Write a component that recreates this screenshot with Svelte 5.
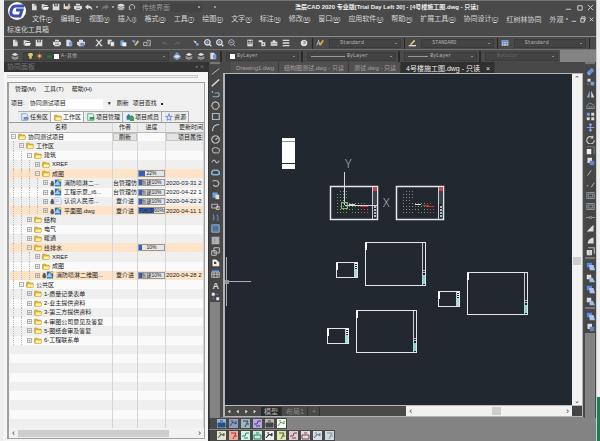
<script lang="ts">
  interface Shape {
    d: string;
    f?: string;
    s?: string;
    w?: number;
  }

  interface Row {
    name: string;
    level: number;
    icon?: string;
    open?: boolean;
    author?: string;
    progress?: number;
    label?: string;
    date?: string;
    hot?: boolean;
  }

  const light = "#dcdcdc";
  const blue = "#6d9fe0";

  // All icons are drawn on a 12x12 grid
  const icons: Record<string, Shape[]> = {
    file: [{ d: "M3 1h4l3 3v7H3z", f: light }, { d: "M7 1v3h3", s: "#777" }],
    open: [{ d: "M1 2h4l1 1h4v2H4l-2 4H1z", f: light }, { d: "M4 6h8l-2 4H2z", f: "#f4f4f4" }],
    save: [{ d: "M1 1h2v4h6V1h2v10H1z", f: light }, { d: "M4 1h4v3H4z", f: "#aaa" }],
    saveas: [{ d: "M1 1h2v4h5V1h2v8H1z", f: light }, { d: "M5 10l5-6 2 2-5 5z", f: "#e2b266" }],
    print: [{ d: "M3 1h6v3h2l1 1v4h-2v2H2V9H0V5l1-1h2z", f: light }, { d: "M3 4h6M3 8h6", s: "#555" }],
    undo: [{ d: "M5 2v2q6 0 6 7-2-4-6-4v3L0 6z", f: light }],
    redo: [{ d: "M7 2v2q-6 0-6 7 2-4 6-4v3l5-4z", f: "#777" }],
    redoDim: [{ d: "M7 3v2q-5 0-5 5 2-3 5-3v2l4-3z", f: "#5e5e5e" }],
    undoDim: [{ d: "M5 3v2q5 0 5 5-2-3-5-3v2L1 6z", f: "#5e5e5e" }],
    disk: [{ d: "M1 3q5-4 10 0v6q-5 4-10 0z", f: light }, { d: "M1 5q5 3 10 0M1 8q5 3 10 0", s: "#555" }],
    refresh: [{ d: "M3 9a4 4 0 1 1 6 0M2 6v4h3", s: "#b5b5b5", w: 1.5 }],
    preview: [{ d: "M2 1h5l3 3v7H2z", f: light }, { d: "M6 4h5v6H6z", f: blue }],
    publish: [{ d: "M3 1h6v3h3v5h-2v2H2V9H0V4h3z", f: light }, { d: "M5 6h6v4H5z", f: "#5a8fd8" }],
    cut: [{ d: "M2 1l7 8M10 1L3 9", s: light, w: 2 }, { d: "M1 9h3v2H1zM8 9h3v2H8z", f: light }],
    copy: [{ d: "M1 1h6v7H1z", f: light }, { d: "M5 4h6v7H5z", f: "#eee", s: "#555" }],
    paste: [{ d: "M2 2h5v8H2z", f: blue }, { d: "M5 5h6v6H5z", f: "#e8eefc" }],
    brush: [{ d: "M1 2h6l-2 5z", f: "#6aa0e8" }, { d: "M5 9l5-7 2 2-5 6z", f: "#e1c27c" }],
    block: [{ d: "M1 5h5v5H1zM6 2h5v8H7", s: light }, { d: "M6 2l4 6", s: "#d6a85c" }],
    pan: [{ d: "M2 2l3 5 2-3z", f: light }, { d: "M6 6h4v4H6z", f: blue }],
    zoomin: [{ d: "M5 1a4 4 0 1 0 .1 0M8 8l3 3", s: light, w: 2 }, { d: "M3 5h4M5 3v4", s: blue, w: 2 }],
    zoomout: [{ d: "M5 1a4 4 0 1 0 .1 0M8 8l3 3", s: light, w: 1 }, { d: "M3 5h4", s: blue, w: 2 }],
    props: [{ d: "M2 1h8v10H2z", f: light }, { d: "M3 3h2v2H3zM7 3h2v2H7zM3 7h6", f: "#555", s: "#555" }],
    tree: [{ d: "M1 2h6v3H1zM5 5h6v6H5z", f: light }, { d: "M7 7h2v2H7z", f: "#555" }],
    box: [{ d: "M1 4h10v6H1zM4 2h4v2H4z", f: light }, { d: "M1 7h10", s: "#777" }],
    list: [{ d: "M1 1h10v2H1zM1 5h10v2H1zM1 9h10v2H1z", f: light }],
    help: [{ d: "M6 1a5 5 0 1 0 .1 0z", f: light }, { d: "M5 4h3v2H6v2", s: "#666" }],
    textstyle: [{ d: "M1 10l3-8 2 8M2 7h3", s: light }, { d: "M5 8l5-7 2 2-5 7z", f: "#e3a544" }],
    dimstyle: [{ d: "M1 10h11", s: light, w: 2 }, { d: "M3 8l6-7 2 2-6 6z", f: "#e8c46a" }],
    tablestyle: [{ d: "M1 2h10v8H1z", f: light }, { d: "M1 2h10v3H1z", f: "#5a8fe0" }, { d: "M1 7h10M4 5v5M8 5v5", s: "#4773bd" }],
    layers: [{ d: "M1 4l5-3 5 3-5 2z", f: light }, { d: "M1 7l5 2 5-2M1 9l5 2 5-2", s: light }],
    layersBlue: [{ d: "M6 0l4 4H2z", f: blue }, { d: "M0 6l6-2 6 2-6 4z", f: light }, { d: "M1 8l5 3 5-3", s: blue, w: 2 }],
    bulb: [{ d: "M6 1a3 3 0 0 1 2 6v3H4V7a3 3 0 0 1 2-6z", f: "#e9c565" }, { d: "M4 10h4", s: light }],
    sun: [{ d: "M6 0v12M0 6h12M2 2l8 8M10 2l-8 8", s: "#c77b3d" }, { d: "M4 4h4v4H4z", f: "#f2d05f" }],
    lock: [{ d: "M4 5h7v5H4z", f: "#2c7436" }, { d: "M5 5V2h4v3", s: "#35653b" }],
    line: [{ d: "M1 10l10-8", s: light, w: 1 }],
    ray: [{ d: "M1 11L11 2", s: light, w: 2 }],
    pline: [{ d: "M1 2h1v2M2 9h6q3 0 3-3T8 4H5", s: "#8fa9c8", w: 1.5 }],
    polygon: [{ d: "M6 1l4 2 1 4-3 4H4L1 7l1-4z", s: "#bdbdbd", w: 1.5 }],
    rect: [{ d: "M2 2h9v8H2z", s: "#aebccd", w: 1.5 }],
    arc: [{ d: "M2 11Q2 2 11 2", s: "#bccadb", w: 1.5 }],
    circle: [{ d: "M6 1a5 5 0 1 0 .1 0M6 6l3-2", s: "#c4c4c4", w: 1.5 }],
    cloud: [{ d: "M3 3q3-2 6 0 3 1 2 4 0 3-4 2-5 1-5-3-1-1 1-3", s: "#aaa", w: 1.5 }],
    spline: [{ d: "M1 7q3-5 5-1t5-1", s: "#bbb", w: 1.5 }],
    ellipse: [{ d: "M3 3h6l2 2v3L9 9H3L1 8V5z", s: "#88b3d8", w: 2 }],
    earc: [{ d: "M2 3q4-2 7 0 3 3 0 6-3 2-6-1", s: "#bbb", w: 1.5 }],
    insert: [{ d: "M2 2h7v7H2z", f: blue }, { d: "M6 5h5v6H6z", f: light }],
    makeblock: [{ d: "M1 3h8v5H1zM7 6h4v4H7z", s: light }],
    points: [{ d: "M3 2q2 4 0 8M8 2q2 4 1 9", s: "#6486c8", w: 1.5 }],
    hatch: [{ d: "M1 1h10v10H1z", f: "#547ea9", s: "#a8bdd0" }, { d: "M4 3v6M8 3v6M3 6h6", s: "#41678d" }],
    gradient: [{ d: "M1 1h10v10H1z", f: "#b0b5b8" }, { d: "M1 1v10M11 1v10M5 3v6", s: "#777c82" }],
    region: [{ d: "M4 1h7v7H4zM1 5h6v6H1z", s: "#c4c4c4", w: 1.3 }],
    wipe: [{ d: "M2 2h5l4 4v5H2z", f: "#eee" }, { d: "M4 5h3v3H4z", f: "#444" }],
    table: [{ d: "M1 1h10v3H1z", f: "#4978bd" }, { d: "M1 4h10v7H1zM1 7h10M4 4v7M8 4v7", s: light }],
    dots: [{ d: "M1 1h4v4H1zM7 7h4v4H7z", f: "#e6e6f4" }, { d: "M6 3h4M3 6v4", s: "#6d87c9" }],
    erase: [{ d: "M2 6l6-5 3 4-6 6H2z", f: "#648ee0" }, { d: "M2 7l3 3", s: "#ddd" }],
    copyobj: [{ d: "M2 1h4v4H2z", f: light }, { d: "M6 5h5v5H6z", f: blue }, { d: "M1 8h3", s: "#d59259" }],
    mirror: [{ d: "M5 1v9H1z", f: "#7ba7dc" }, { d: "M7 1v9h4z", f: light }],
    offset: [{ d: "M1 10h10V7Q9 3 5 3 2 4 1 7zM3 8h6", s: "#8ca9c4" }],
    array: [{ d: "M1 1h4v4H1z", f: blue }, { d: "M7 1h4v4H7zM1 7h4v4H1zM7 7h4v4H7z", f: light }],
    move: [{ d: "M6 1v10M1 6h10M4 3l2-2 2 2M4 9l2 2 2-2", s: "#7ca3eb", w: 1.5 }],
    rotate: [{ d: "M9 3a5 5 0 1 0 2 4M9 1v3H6", s: "#c9c9c9", w: 1.5 }],
    scale: [{ d: "M1 4h6v7H1z", f: "#eee" }, { d: "M1 1h10v10", s: "#6a94a4" }],
    stretch: [{ d: "M2 1h6v7H2z", f: light }, { d: "M5 5h6v6H5z", f: "#5a86ca" }],
    trim: [{ d: "M2 10L7 3", s: light }],
    extend: [{ d: "M7 11l4-6M1 9h2", s: light }],
    breakat: [{ d: "M1 2h10v8H1zM3 4h6v4H3z", s: "#9eabb8" }],
    join: [{ d: "M0 6h4M8 6h4M5 4v4M7 4v4", s: "#b5b5b5" }],
    chamfer: [{ d: "M1 10L10 1v9z", f: light }],
    fillet: [{ d: "M2 10q1-7 8-8v8z", f: light }],
    explode: [{ d: "M1 4h7v7H1z", f: light }, { d: "M3 1h8v8M5 4v7", s: "#b7b7b7", w: 1.5 }],
    front: [{ d: "M1 1h7v6H1z", f: "#5c8ae2" }, { d: "M4 4h6l2 7H5z", f: "#a9c2f2" }],
    back: [{ d: "M1 1h6v6H1z", f: light }, { d: "M4 5h5l3 6H5z", f: "#9dbbee" }],
  };

  const quick = ["file", "open", "save", "saveas", "print", "undo"];
  const menus = ["文件F", "编辑E", "视图V", "插入I", "格式O", "工具T", "绘图D", "文字X", "标注N", "修改M", "窗口W", "应用软件U", "帮助H", "扩展工具G", "协同设计C"];
  const standard = [
    ["file", "open", "save"],
    ["print", "preview", "publish"],
    ["cut", "copy", "paste", "brush", "block"],
    ["undoDim", "redoDim"],
    ["pan", "zoomin", "zoomin", "zoomout"],
    ["props", "tree", "box", "list"],
    ["help"],
  ];
  const drawTools = ["line", "ray", "pline", "polygon", "rect", "arc", "circle", "cloud", "spline", "ellipse", "earc", "insert", "makeblock", "points", "hatch", "gradient", "region", "wipe", "table", "text", "dots"];
  const editTools = ["erase", "copyobj", "mirror", "offset", "array", "move", "rotate", "scale", "stretch", "trim", "extend", "breakat", "breakat", "join", "chamfer", "fillet", "explode"];
  const orderTools = ["front", "back", "front", "back"];

  const bottomTools = [
    [["#8fb4d6", "#28507e"], ["#8d9cba", "#34456d"], ["#9db6c0", "#2d4450"], ["#b5a8e0", "#443a86"], ["#b4b4b4", "#444"], ["#f4faf4", "#4f9561"]],
    [["#dfe6c9", "#5c6b52"], ["#eba9a0", "#a83a35"], ["#d5f4e8", "#2f8066"], ["#c2ece0", "#347c6d"], ["#eee", "#333"], ["#e5eaa8", "#4d5b36"], ["#e5c9d3", "#6d4555"], ["#ead8dd", "#694750"], ["#d4dde2", "#71828b"], ["#cfdbe1", "#7c8f99"]],
  ];

  const rows: Row[] = [
    { name: "协同测试项目", level: 0, open: true },
    { name: "工作区", level: 1, open: true },
    { name: "建筑", level: 2, open: true },
    { name: "XREF", level: 3 },
    { name: "成图", level: 3, open: true, progress: 22, label: "22%", hot: true },
    { name: "消防喷淋二...", level: 4, icon: "dwg", author: "台管理仿", progress: 10, label: "新建10%", date: "2020-03-31 2" },
    { name: "工程示意_t6...", level: 4, icon: "dwg", author: "台管理仿", progress: 10, label: "新建10%", date: "2020-04-22 1" },
    { name: "认识人民币...", level: 4, icon: "doc", author: "覃介进", progress: 10, label: "新建10%", date: "2020-04-22 2" },
    { name: "平面图.dwg", level: 4, icon: "dwg", author: "覃介进", progress: 60, label: "已校正60%", date: "2020-04-11 1", hot: true },
    { name: "结构", level: 2 },
    { name: "电气", level: 2 },
    { name: "暖通", level: 2 },
    { name: "给排水", level: 2, open: true, progress: 10, label: "10%", hot: true },
    { name: "XREF", level: 3 },
    { name: "成图", level: 3 },
    { name: "消防喷淋二维图...", level: 3, icon: "dwg", author: "覃介进", progress: 10, label: "新建10%", date: "2020-04-28 2", hot: true },
    { name: "公共区", level: 1, open: true },
    { name: "1-质量记录表单", level: 2 },
    { name: "2-业主提供资料", level: 2 },
    { name: "3-第三方提供资料", level: 2 },
    { name: "4-审图公司意见及答复", level: 2 },
    { name: "5-图纸会审及答复", level: 2 },
    { name: "6-工程联系单", level: 2 },
  ];
  const blank = Array.from({ length: 9 });

  let panelTab = $state("工作区");
  const panelTabs = [
    { name: "任务区", color: "#5d8fc0" },
    { name: "工作区", color: "#e9b83b" },
    { name: "项目管理", color: "#2f9a54" },
    { name: "项目成员", color: "#3b9f5b" },
    { name: "资源", color: "#3b6fc4" },
  ];

  let docTab = $state(3);
  const docTabs = ["Drawing1.dwg", "结构图测试.dwg - 只读", "测试.dwg - 只读", "4号楼施工图.dwg - 只读"];

  // x, y, width, height in drawing space
  const sheets = [
    [140, 168, 61, 44],
    [242, 198, 61, 43],
    [131, 236, 61, 43],
  ];
  const smallSheets = [[111, 188], [213, 217], [102, 254]];
  const plans = [105, 171];

  const plotDots: { x: number; y: number; c: string }[] = [];
  for (let r = 0; r < 8; r++) {
    for (let c = 0; c < 11; c++) {
      if ((r < 4 && c > 3) || (c * 7 + r * 5) % 9 === 0) continue;
      const color = r < 3 ? "#85858e" : c > 7 ? "#e04438" : (r + c) % 3 ? "#62b454" : "#b4564a";
      plotDots.push({ x: 7 + c * 3, y: 4 + r * 3, c: color });
    }
  }
</script>

{#snippet icon(name: string)}
  <svg class="icon" viewBox="0 0 12 12" aria-hidden="true">
    {#if name === "text"}
      <text x="2" y="11" font-size="12" font-weight="bold" fill="#d8d8d8">A</text>
    {:else}
      {#each icons[name] as p}
        <path d={p.d} fill={p.f ?? "none"} stroke={p.s ?? "none"} stroke-width={p.w ?? 1} />
      {/each}
    {/if}
  </svg>
{/snippet}

{#snippet tool(name: string)}
  <button class="tool" aria-label={name}>{@render icon(name)}</button>
{/snippet}

{#snippet folder()}
  <svg class="folder" viewBox="0 0 16 14" aria-hidden="true">
    <path d="M1 12V3q0-1 1-1h4l2 2h6v8z" fill="#e5b93c" stroke="#b58a22" />
    <path d="M3 6h12l-1 7H2z" fill="#fff09a" stroke="#c79c2d" />
  </svg>
{/snippet}

<div class="desktop">
  <div class="window">
    <header>
      <div class="logo">
        <svg viewBox="0 0 20 20" aria-hidden="true">
          <circle cx="10" cy="10" r="9" fill="#fff" />
          <path d="M17 5H9Q5 5 4 10t4 5h5l2-6H9" fill="none" stroke="#3c50ae" stroke-width="3" />
        </svg>
      </div>
      <div class="bars">
        <div class="titlebar">
          <div class="quick">
            {#each quick as name}{@render tool(name)}{/each}
            <i class="dot"></i>
            {@render tool("redo")}
            <i class="dot"></i>
            {@render tool("disk")}
            {@render tool("refresh")}
            <button class="workspace">传统界面 <i class="dot"></i></button>
            <i class="dot"></i>
          </div>
          <h1>浩辰CAD 2020 专业版[Trial Day Left 30] - [4号楼施工图.dwg - 只读]</h1>
          <div class="winbtns">
            <button aria-label="Minimize"><svg viewBox="0 0 8 8"><path d="M1 6h6" /></svg></button>
            <button aria-label="Maximize"><svg viewBox="0 0 8 8"><path d="M2 2h5v5H2z" /></svg></button>
            <button aria-label="Close"><svg viewBox="0 0 8 8"><path d="M1 1l6 6M7 1L1 7" /></svg></button>
          </div>
        </div>
        <nav class="menubar">
          {#each menus as m}
            <button>{m.slice(0, -1)}<small>(<u>{m.slice(-1)}</u>)</small></button>
          {/each}
          <button>红树林协同</button>
          <div class="look">
            <button>外观</button>
            <i class="dot"></i>
            <button aria-label="Minimize drawing"><svg viewBox="0 0 8 8"><path d="M2 6h5" /></svg></button>
            <button aria-label="Restore drawing"><svg viewBox="0 0 8 8"><path d="M2 3h4v4H2zM3 3V1h4v4H6" /></svg></button>
            <button aria-label="Close drawing"><svg viewBox="0 0 8 8"><path d="M2 2l4 4M6 2L2 6" /></svg></button>
          </div>
        </nav>
      </div>
    </header>
    <div class="extra">标准化工具箱</div>

    <div class="toolbar">
      <div class="icons">
        {#each standard as group}
          <div class="group">{#each group as name}{@render tool(name)}{/each}</div>
        {/each}
      </div>
      <div class="style">{@render tool("textstyle")}<button class="combo center">Standard</button></div>
      <div class="style">{@render tool("dimstyle")}<button class="combo center">STANDARD</button></div>
      <div class="style">{@render tool("tablestyle")}<button class="combo center">Standard</button></div>
      <div class="tail"></div>
    </div>

    <div class="toolbar second">
      <div class="layerbar">
        {@render tool("layers")}
        <button class="combo layer">
          {@render icon("bulb")}{@render icon("sun")}{@render icon("lock")}<i class="swatch"></i>A-其他
        </button>
        {@render tool("layersBlue")}{@render tool("layers")}{@render tool("layers")}{@render tool("preview")}
      </div>
      <div class="prop"><button class="combo"><i class="swatch"></i>ByLayer</button></div>
      <div class="prop wide"><button class="combo"><i class="rule long"></i>ByLayer</button></div>
      <div class="prop"><button class="combo"><i class="rule"></i>ByLayer</button></div>
      <div class="prop"><button class="combo dim">ByColor</button></div>
      <div class="filler"></div>
    </div>

    <main>
      <section class="panel">
        <div class="panel-title"><span>协同面板</span><span>▪ ×</span></div>
        <div class="grip"></div>
        <div class="panel-body">
          <nav class="panel-menu">
            <button>管理(M)</button><button>工具(T)</button><button>帮助(H)</button>
          </nav>
          <div class="project">
            <label for="project">项目:</label>
            <select id="project"><option>协同测试项目</option></select>
            <span class="caret">▼</span>
            <button>刷新</button>
            <button>项目查找</button>
            <i class="dot black"></i>
          </div>
          <div class="panel-tabs">
            {#each panelTabs as t}
              <button class:active={panelTab === t.name} onclick={() => (panelTab = t.name)}>
                {#if t.name === "工作区"}
                  {@render folder()}
                {:else if t.name === "资源"}
                  <svg class="ticon" viewBox="0 0 12 12"><path d="M6 1l1 4h4L8 7l1 4-3-2-3 2 1-4-3-2h4z" fill="#dfe9ff" stroke={t.color} /></svg>
                {:else if t.name === "项目成员"}
                  <svg class="ticon" viewBox="0 0 12 12"><path d="M1 5l3-4 3 4v5H1z" fill="#3a78b8" /><path d="M5 6l3-3 4 3v6H6z" fill={t.color} /></svg>
                {:else}
                  <svg class="ticon" viewBox="0 0 12 12"><path d="M1 1h7l2 2v8H1z" fill="#e4eef8" stroke={t.color} /><path d="M4 6h7v4H4z" fill={t.color} /></svg>
                {/if}
                {t.name}
              </button>
            {/each}
          </div>
          <div class="grid">
            <table>
              <colgroup><col /><col class="c-author" /><col class="c-progress" /><col class="c-date" /></colgroup>
              <thead>
                <tr><th>名称</th><th>作者</th><th>进度</th><th class="right">更新时间</th></tr>
              </thead>
              <tbody>
                {#each rows as row, i}
                  <tr class:hot={row.hot}>
                    <td>
                      <div class="node">
                        {#each Array(row.level) as _}<i class="guide"></i>{/each}
                        <i class="toggle">{row.open ? "−" : "+"}</i>
                        {#if row.icon}
                          <svg class="fileicon" viewBox="0 0 20 14" aria-hidden="true">
                            <path d="M1 7h5v5H1zM2 7V4h3v3" fill="#555" stroke="#555" />
                            {#if row.icon === "dwg"}
                              <path d="M8 1h11v12H8z" fill="#2d65b8" />
                              <path d="M8 9l5-7 5 9H8z" fill="#8ed0ed" />
                              <path d="M13 1h6v4h-3z" fill="#f2c53d" />
                            {:else}
                              <path d="M8 1h8l3 3v9H8z" fill="#f4f8ff" stroke="#94a6c4" />
                              <path d="M10 5h6M10 8h6" stroke="#7f9dcc" />
                            {/if}
                          </svg>
                        {:else}
                          {@render folder()}
                        {/if}
                        <span>{row.name}</span>
                      </div>
                    </td>
                    <td class="author">{#if i === 0}<button class="cell">刷新</button>{:else}{row.author ?? ""}{/if}</td>
                    <td>
                      {#if row.progress}
                        <div class="bar"><i style="width: {row.progress}%"></i><span>{row.label}</span></div>
                      {/if}
                    </td>
                    <td class="date">{#if i === 0}<button class="cell right">项目属性</button>{:else}{row.date ?? ""}{/if}</td>
                  </tr>
                {/each}
                {#each blank as _}<tr><td></td><td></td><td></td><td></td></tr>{/each}
              </tbody>
            </table>
          </div>
          <div class="hscroll panel-scroll"><span>‹</span><i></i><span>›</span></div>
        </div>
      </section>

      <section class="work">
        <div class="workrow">
          <div class="side">
            <div class="handle"></div>
            <div class="tools draw">{#each drawTools as name}{@render tool(name)}{/each}</div>
          </div>
          <div class="document">
            <div class="doc-tabs">
              {#each docTabs as t, i}
                <button class:active={docTab === i} onclick={() => (docTab = i)}>
                  {t}{#if docTab === i}<span>×</span>{/if}
                </button>
              {/each}
            </div>
            <div class="frame">
              <div class="view">
                <svg class="canvas" role="img" aria-label="4号楼施工图">
                  <rect x="57" y="64" width="13" height="31" fill="#fff" />
                  <path d="M57 67.5h13" stroke="#8a8f96" />
                  <path d="M57 89.5h13" stroke="#222830" />
                  {#each plans as x}
                    <g transform="translate({x} 112)">
                      <rect x=".5" y=".5" width="47" height="33" class="sheet" stroke-width="1.5" />
                      <path d="M42.5 1v32" class="thin" />
                      {#each plotDots as p}<rect x={p.x} y={p.y + 1} width="1" height="1" fill={p.c} />{/each}
                      <path d="M27 19.5h6M30 20.5h7" stroke="#c23b32" />
                      <path d="M19 18.5h6" stroke="#d8dadb" />
                      <path d="M43 1h4v4h-4z" fill="#c9474b" />
                      <path d="M43 5h4v13h-4z" fill="#3d444b" />
                      <path d="M45 20v12" stroke="#b9bdc2" stroke-width="2" stroke-dasharray="2 1" />
                    </g>
                  {/each}
                  <path d="M119.5 98v33M120 131.5h33" stroke="#d5d9dd" fill="none" />
                  <rect x="116.5" y="128.5" width="6" height="6" fill="none" stroke="#7dbb83" />
                  <text x="120" y="94" class="axis">Y</text>
                  <text x="158" y="133" class="axis">X</text>
                  {#each sheets as [x, y, w, h]}
                    <g transform="translate({x} {y})">
                      <rect x=".5" y=".5" width={w - 1} height={h - 1} class="sheet" />
                      <path d="M{w - 3.5} 1v{h - 2}" class="thin" />
                      <path d="M1 1v7" stroke="#fff" stroke-width="2" />
                      <path d="M{w - 2} 28v4" stroke="#b0b5ba" stroke-width="2" stroke-dasharray="1 1" />
                      <rect x={w - 3} y="33" width="2" height={h - 35} fill="#79d4cd" />
                    </g>
                  {/each}
                  {#each smallSheets as [x, y]}
                    <g transform="translate({x} {y})">
                      <rect x=".5" y=".5" width="21" height="15" class="sheet" />
                      <path d="M1 1v7" stroke="#fff" stroke-width="2" />
                      <path d="M18.5 1v14" class="thin" />
                      <path d="M20 1v5" stroke="#fff" stroke-width="2" stroke-dasharray="1 1" />
                      <rect x="19" y="7" width="2" height="8" fill="#9be0da" />
                    </g>
                  {/each}
                  <path d="M1.5 183v49M3 207.5h23" stroke="#a9adb1" />
                  <rect x="0" y="206" width="4" height="4" fill="#92979c" />
                </svg>
                <div class="vscroll"><span>⌃</span><i></i><span>⌄</span></div>
              </div>
              <div class="layouts">
                <div class="layout-tabs">
                  {#each ["M2 1v6M7 1L3 4l4 3z", "M6 1L2 4l4 3z", "M2 1l4 3-4 3z", "M1 1l4 3-4 3zM6 1v6"] as d}
                    <button class="step" aria-label="Layout"><svg viewBox="0 0 8 8"><path {d} fill="#ddd" /></svg></button>
                  {/each}
                  <button class="layout on">模型</button>
                  <button class="layout">布局1</button>
                  <button class="layout">+</button>
                </div>
                <div class="hscroll"><span>‹</span><i></i><span>›</span></div>
                <div class="corner"></div>
              </div>
            </div>
          </div>
          <div class="side">
            <div class="handle"></div>
            <div class="tools edit">{#each editTools as name}{@render tool(name)}{/each}</div>
            <div class="handle"></div>
            <div class="tools order">{#each orderTools as name}{@render tool(name)}{/each}</div>
            <div class="handle"></div>
            <div class="tools last">{@render tool("front")}{@render tool("stretch")}</div>
          </div>
        </div>
        {#each bottomTools as set, n}
          <div class="dock">
            {#each set as [bg, fg], i}
              <button aria-label="Tool {n + 1}-{i + 1}">
                <svg viewBox="0 0 9 9">
                  <rect width="9" height="9" fill={bg} />
                  <path d={["M1 4h7v4H1zM3 2h3", "M1 7l3-4 3 2V2M2 2h2", "M2 2h5L4 8M6 5h2", "M1 5h3l1-3h3M3 7h4"][(i + n) % 4]} fill={i % 4 === 0 ? fg : "none"} stroke={fg} />
                </svg>
              </button>
            {/each}
          </div>
        {/each}
      </section>
    </main>
  </div>
  <aside><i></i></aside>
</div>

<style>
  :global(body) {
    background: #f1f1f1;
  }

  .desktop {
    display: flex;
    height: 100vh;
    padding-left: 4px;
    background: #efefef;
    font-family: "Liberation Sans", "Noto Sans CJK SC", sans-serif;
    font-size: 7px;
    line-height: 9px;
    color: #d6d6d6;
    box-sizing: border-box;
    overflow: hidden;
  }

  .desktop *,
  .desktop *::before {
    box-sizing: border-box;
  }

  button,
  select {
    font: inherit;
    color: inherit;
    background: none;
    border: 0;
    padding: 0;
    margin: 0;
    white-space: nowrap;
    appearance: none;
  }

  svg {
    display: block;
  }

  aside {
    width: 4px;
    display: flex;
    align-items: flex-end;
    border-left: 1px solid #ccc;
  }

  aside i {
    width: 100%;
    height: 10%;
    background: #16834d;
  }

  .window {
    flex: 1;
    min-width: 0;
    display: flex;
    flex-direction: column;
    background: #4a4a4a;
    border-top: 1px solid #747474;
  }

  header {
    display: flex;
    height: 24px;
  }

  .logo {
    width: 26px;
    padding: 0 3px;
  }

  .logo svg {
    width: 20px;
    height: 20px;
  }

  .bars {
    flex: 1;
    min-width: 0;
  }

  .titlebar,
  .menubar,
  .quick,
  .winbtns,
  .look {
    display: flex;
    align-items: center;
  }

  .titlebar {
    height: 12px;
  }

  .quick {
    width: 265px;
    flex-shrink: 0;
    gap: 3px;
  }

  .tool,
  .icon {
    width: 8px;
    height: 8px;
    flex-shrink: 0;
  }

  .dot {
    width: 2px;
    height: 2px;
    background: #999;
    flex-shrink: 0;
  }

  .workspace {
    display: flex;
    align-items: center;
    justify-content: space-between;
    width: 64px;
    margin-right: 8px;
    padding: 0 3px;
    background: #444;
    color: #999;
  }

  h1 {
    flex: 1;
    margin: 0;
    font-size: 6px;
    font-weight: bold;
    color: #eee;
    white-space: nowrap;
  }

  .winbtns {
    gap: 4px;
    padding-right: 2px;
  }

  .winbtns svg,
  .look svg {
    width: 7px;
    height: 7px;
    fill: none;
    stroke: #ddd;
  }

  .menubar {
    height: 12px;
    padding-left: 2px;
    gap: 8px;
  }

  small {
    font-size: 5px;
  }

  .look {
    margin-left: auto;
    padding-right: 2px;
    gap: 2px;
  }

  .extra {
    height: 11px;
    padding-left: 3px;
    line-height: 10px;
  }

  .toolbar {
    display: flex;
    height: 13px;
    border-top: 1px solid #8b8b8b;
    flex-shrink: 0;
    align-items: center;
  }

  .icons,
  .group {
    display: flex;
    align-items: center;
  }

  .icons {
    flex: 0 0 308px;
    justify-content: space-between;
    padding: 0 4px 0 7px;
  }

  .group {
    gap: 4px;
  }

  .style {
    flex: 93;
    display: flex;
    align-items: center;
    gap: 5px;
    height: 11px;
    padding: 0 3px;
    border-left: 1px solid #262626;
  }

  .tail {
    width: 7px;
    height: 11px;
    border-left: 1px solid #262626;
  }

  .combo {
    flex: 1;
    min-width: 0;
    height: 9px;
    display: flex;
    align-items: center;
    gap: 2px;
    padding: 0 3px;
    background: #434343;
    border: 1px solid #3b3b3b;
    color: #b4b4b4;
    font-family: "Liberation Mono", "Noto Sans CJK SC", monospace;
    font-size: 5px;
    line-height: 7px;
  }

  .combo::after {
    content: "";
    width: 2px;
    height: 1px;
    margin-left: auto;
    background: #888;
  }

  .combo.center {
    padding-left: 10px;
  }

  .combo.dim {
    padding-left: 11px;
    color: #6a6a6a;
  }

  .second {
    height: 13px;
    border-color: #707070;
  }

  .layerbar {
    flex: 0 0 216px;
    display: flex;
    align-items: center;
    gap: 4px;
    padding: 0 3px 0 7px;
  }

  .combo.layer .icon {
    width: 7px;
  }

  .swatch {
    width: 5px;
    height: 5px;
    background: #fff;
    flex-shrink: 0;
  }

  .prop {
    flex: 80;
    display: flex;
    align-items: center;
    height: 11px;
    padding: 0 2px 0 4px;
    border-left: 2px solid #2b2b2b;
    min-width: 0;
  }

  .wide {
    flex: 98;
  }

  .rule {
    width: 20px;
    height: 1px;
    background: #999;
  }

  .rule.long {
    width: 34px;
  }

  .filler {
    width: 36px;
    height: 12px;
    background: #848484;
  }

  main {
    flex: 1;
    min-height: 0;
    display: flex;
  }

  .panel {
    flex: 0 0 205px;
    min-width: 0;
    display: flex;
    flex-direction: column;
    background: #f6f6f6;
    color: #222;
    font-size: 6px;
    border-right: 1px solid #333;
  }

  .panel-title {
    display: flex;
    justify-content: space-between;
    height: 10px;
    padding: 0 4px 0 3px;
    background: #343434;
    color: #777;
    font-size: 7px;
  }

  .grip {
    height: 3px;
    margin: 3px 10px 4px 3px;
    border: 1px solid #c9c9c9;
    border-left: 0;
  }

  .panel-body {
    flex: 1;
    min-height: 0;
    display: flex;
    flex-direction: column;
    margin: 0 3px 2px 3px;
    border: 1px solid #a0a0a0;
    border-left-width: 2px;
    background: #f0f0f0;
  }

  .panel-menu {
    display: flex;
    gap: 8px;
    height: 13px;
    padding-left: 6px;
    align-items: center;
  }

  .project {
    display: flex;
    align-items: center;
    height: 15px;
    padding-left: 2px;
    gap: 4px;
  }

  select {
    width: 74px;
    height: 10px;
    padding-left: 1px;
    background: #fff;
  }

  .caret {
    font-size: 5px;
    margin-right: 1px;
  }

  .black {
    background: #222;
  }

  .panel-tabs {
    display: flex;
    height: 12px;
    padding-left: 9px;
    border-bottom: 1px solid #999;
  }

  .panel-tabs button {
    display: flex;
    align-items: center;
    gap: 1px;
    padding: 0 2px 0 3px;
    border: 1px solid #aaa;
    border-width: 1px 1px 0 0;
    background: #ececec;
  }

  .panel-tabs .active {
    background: #fbfbfb;
  }

  .ticon {
    width: 8px;
    height: 8px;
  }

  .folder {
    width: 8px;
    height: 7px;
    flex-shrink: 0;
  }

  .grid {
    flex: 1;
    min-height: 0;
    overflow: hidden;
    margin-left: 1px;
    background: #fafafa;
  }

  table {
    width: 100%;
    height: 100%;
    border-collapse: collapse;
    table-layout: fixed;
    line-height: 8px;
  }

  .c-author {
    width: 25px;
  }

  .c-progress {
    width: 28px;
  }

  .c-date {
    width: 38px;
  }

  th,
  td {
    height: 9px;
    padding: 0;
    font-weight: normal;
    white-space: nowrap;
    overflow: hidden;
    border-right: 1px solid #d5d5d5;
  }

  th {
    background: #ececec;
    border-bottom: 1px solid #bbb;
  }

  .right {
    text-align: right;
  }

  tbody tr:nth-child(even) {
    background: #efefef;
  }

  tbody tr.hot {
    background: #fde3c8;
  }

  .author {
    text-align: center;
  }

  .cell {
    display: block;
    width: 100%;
    height: 8px;
    line-height: 7px;
    background: #e3e3e3;
    border: 1px solid #c4c4c4;
  }

  .node {
    display: flex;
    align-items: center;
    height: 8px;
    padding-left: 1px;
  }

  .node span {
    margin-left: 2px;
  }

  .guide {
    flex: 0 0 8px;
    height: 10px;
    border-left: 1px dotted #bbb;
    margin-left: 2px;
    margin-right: -2px;
  }

  .toggle {
    width: 5px;
    height: 5px;
    margin-right: 2px;
    flex-shrink: 0;
    border: 1px solid #b0b0b0;
    font-size: 5px;
    font-style: normal;
    line-height: 3px;
    text-align: center;
    color: #777;
  }

  .fileicon {
    width: 12px;
    height: 8px;
    flex-shrink: 0;
  }

  .bar {
    position: relative;
    height: 7px;
    border: 1px solid #999;
    background: #e5e5e5;
    text-align: center;
    font-size: 5px;
    line-height: 5px;
  }

  .bar i {
    position: absolute;
    left: 0;
    top: 0;
    bottom: 0;
    min-width: 3px;
    background: #345fba;
  }

  .bar span {
    position: relative;
  }

  .hscroll {
    display: flex;
    align-items: center;
    height: 10px;
    background: #f1f1f1;
    color: #333;
    padding: 0 3px;
    font-size: 9px;
  }

  .hscroll i {
    height: 8px;
    width: 9px;
    margin-left: 50%;
    background: #cdcdcd;
  }

  .hscroll span:last-child {
    margin-left: auto;
  }

  .panel-scroll i {
    margin-left: 3px;
    width: 151px;
    height: 7px;
  }

  .work {
    flex: 1;
    min-width: 0;
    display: flex;
    flex-direction: column;
    background: #838383;
  }

  .workrow {
    flex: 1;
    min-height: 0;
    display: flex;
  }

  .side {
    width: 12px;
    flex-shrink: 0;
    border: 1px solid #4a4a4a;
    border-width: 0 1px;
  }

  .handle {
    height: 4px;
    background: #4a4a4a;
    border-top: 2px solid #777;
  }

  .tools {
    display: grid;
    grid-auto-rows: 1fr;
    place-items: center;
    background: #464646;
  }

  .draw {
    height: 236px;
  }

  .edit {
    height: 191px;
  }

  .order {
    height: 46px;
  }

  .last {
    height: 22px;
  }

  .side .tool,
  .side .icon {
    width: 9px;
    height: 9px;
  }

  .document {
    flex: 1;
    min-width: 0;
    display: flex;
    flex-direction: column;
    background: #484848;
    margin-bottom: 1px;
  }

  .doc-tabs {
    display: flex;
    height: 11px;
    padding-left: 10px;
    color: #a2a2a2;
    font-size: 6px;
  }

  .doc-tabs button {
    padding: 1px 4px 0 5px;
    background: #505050;
    border-right: 1px solid #3b3b3b;
  }

  .doc-tabs .active {
    background: #303030;
    color: #ededed;
    font-size: 7px;
  }

  .doc-tabs span {
    margin-left: 6px;
    font-weight: normal;
  }

  .frame {
    flex: 1;
    min-height: 0;
    display: flex;
    flex-direction: column;
    margin: 0 1px 0 2px;
    border: 1px solid #b5b5b5;
    border-width: 1px 1px 1px 2px;
  }

  .view {
    flex: 1;
    min-height: 0;
    display: flex;
    background: #21282f;
  }

  .canvas {
    flex: 1;
    min-width: 0;
    height: 100%;
  }

  .sheet {
    fill: none;
    stroke: #e4e6e9;
  }

  .thin {
    fill: none;
    stroke: #c9ccd0;
  }

  .axis {
    font-size: 12px;
    fill: #b3b8bd;
    font-family: "Noto Sans", sans-serif;
    font-weight: 300;
  }

  .vscroll {
    width: 10px;
    display: flex;
    flex-direction: column;
    align-items: center;
    background: #f2f2f2;
    color: #333;
  }

  .vscroll::before {
    content: "";
    flex: 57;
    order: 1;
  }

  .vscroll::after {
    content: "";
    flex: 43;
    order: 3;
  }

  .vscroll i {
    order: 2;
    width: 8px;
    height: 8px;
    background: #cdcdcd;
  }

  .vscroll span:last-child {
    order: 4;
  }

  .layouts {
    display: flex;
    height: 11px;
    border-top: 1px solid #bbb;
  }

  .layout-tabs {
    flex: 184;
    display: flex;
    align-items: center;
    gap: 1px;
    background: #4a4a4a;
  }

  .layouts .hscroll {
    flex: 162;
  }

  .corner {
    width: 10px;
    background: #444;
  }

  .step svg {
    width: 7px;
    height: 5px;
    stroke: none;
  }

  .step {
    width: 8px;
  }

  .layout {
    padding: 0 3px;
    color: #888;
    border-right: 1px solid #333;
  }

  .layout.on {
    background: #2a2a2a;
    color: #b5b5b5;
  }

  .dock {
    display: flex;
    align-self: flex-start;
    align-items: center;
    gap: 3px;
    height: 11px;
    margin: 0 0 1px 0;
    padding: 0 1px 0 7px;
    background: #494949;
    border-left: 1px solid #333;
  }

  .dock:last-child {
    margin-bottom: 0;
  }

  .dock svg {
    width: 9px;
    height: 9px;
  }
</style>
